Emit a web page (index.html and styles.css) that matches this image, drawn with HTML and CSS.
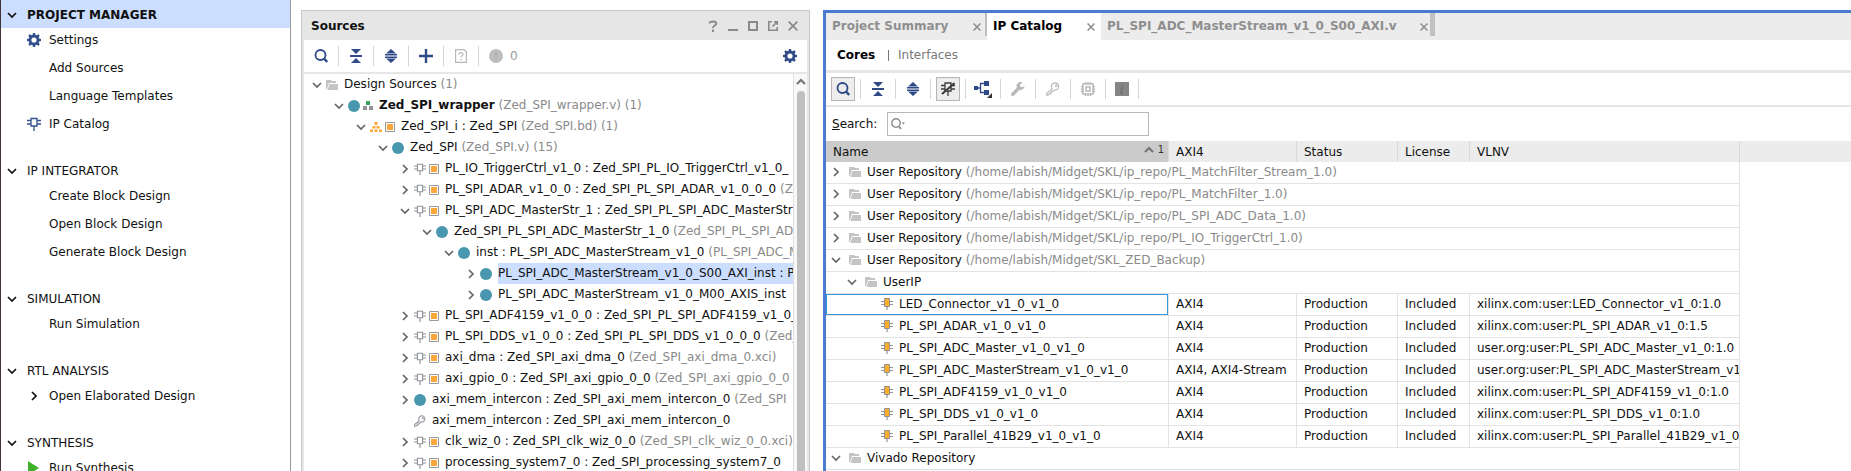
FILE: index.html
```html
<!DOCTYPE html>
<html lang="en">
<head>
<meta charset="utf-8">
<title>Project Manager</title>
<link rel="stylesheet" href="styles.css">
</head>
<body>
<svg class="defs" aria-hidden="true">
  <symbol id="down" viewBox="0 0 10 10"><path d="M1 3l4 4 4-4" fill="none" stroke="currentColor" stroke-width="1.7"/></symbol>
  <symbol id="right" viewBox="0 0 10 10"><path d="M3 1l4 4-4 4" fill="none" stroke="currentColor" stroke-width="1.7"/></symbol>
  <symbol id="up" viewBox="0 0 10 10"><path d="M1 7l4-4 4 4" fill="none" stroke="currentColor" stroke-width="2.2"/></symbol>
  <symbol id="gear" viewBox="0 0 14 14"><path fill="currentColor" fill-rule="evenodd" d="M6 0h2l.5 1.9 1 .4 1.8-1 1.4 1.4-1 1.8.4 1L14 6v2l-1.9.5-.4 1 1 1.8-1.4 1.4-1.8-1-1 .4L8 14H6l-.5-1.9-1-.4-1.8 1-1.4-1.4 1-1.8-.4-1L0 8V6l1.900-.5.4-1-1-1.800 1.400-1.400 1.800 1 1-.4zM7 4.400a2.600 2.600 0 1 0 0 5.200 2.600 2.600 0 0 0 0-5.200z"/></symbol>
  <symbol id="plug" viewBox="0 0 14 14"><path d="M4 1.500h6v7.500H4zM0 3.500h4M0 7h4M10 3.500h4M10 7h4M7 9v5" fill="none" stroke="currentColor" stroke-width="1.300"/></symbol>
  <symbol id="ip" viewBox="0 0 12 12"><path d="M0 3.500h12M0 6.500h12M6 8v4" stroke="#8f9296" stroke-width="1.200"/><path d="M3.500.5h5v8h-5z" fill="#ffae2b" stroke="#8f9296" stroke-width="1"/></symbol>
  <symbol id="play" viewBox="0 0 12 14"><path d="M1 0l11 7L1 14z" fill="#3fb02a"/></symbol>
  <symbol id="folder" viewBox="0 0 12 10"><path d="M0 0h5l1 1h4v2H3L1 9H0z" fill="#c4c4c4"/><path d="M3.500 4H12v6H1.500z" fill="#c4c4c4"/></symbol>
  <symbol id="dot" viewBox="0 0 12 12"><circle cx="6" cy="6" r="6" fill="#4996af"/></symbol>
  <symbol id="square" viewBox="0 0 10 10"><path d="M.5.5h9v9h-9z" fill="#fff" stroke="#9a9a9a"/><path d="M2 2h6v6H2z" fill="#fda63a"/></symbol>
  <symbol id="hier" viewBox="0 0 10 9"><path d="M3 0h4v4H3z" fill="#35a35a"/><path d="M0 5h4v4H0zM6 5h4v4H6z" fill="#909498"/></symbol>
  <symbol id="bd" viewBox="0 0 12 10"><path d="M4.500 0h3v3h-3zM2.500 4h3v2.500h-3zM6.500 4h3v2.500h-3zM0 7.500h3V10H0zM4.500 7.500h3V10h-3zM9 7.500h3V10H9z" fill="#fda63a"/></symbol>
  <symbol id="key" viewBox="0 0 14 14"><path d="M6.200 6.600A3.600 3.600 0 1 1 8.500 8L7 9.300H5.700v1.300H4.400V12H3l-1 1.200H.7v-2z" fill="none" stroke="currentColor" stroke-width="1.200"/><circle cx="10.300" cy="3.800" r="1" fill="none" stroke="currentColor"/></symbol>
  <symbol id="search" viewBox="0 0 14 14"><circle cx="6.500" cy="6" r="5" fill="none" stroke="currentColor" stroke-width="1.800"/><path d="M9.500 9l3.700 4" stroke="currentColor" stroke-width="2.400"/></symbol>
  <symbol id="collapse" viewBox="0 0 12 14"><path d="M1 0h10L6 5zM1 14h10L6 9zM0 6h12v2H0z" fill="currentColor"/></symbol>
  <symbol id="expand" viewBox="0 0 12 14"><path d="M1 4.500h10L6 0zM1 9.500h10L6 14zM0 5h12v1.500H0zM0 7.500h12V9H0z" fill="currentColor"/></symbol>
  <symbol id="plus" viewBox="0 0 14 14"><path d="M7 0v14M0 7h14" stroke="currentColor" stroke-width="2.400"/></symbol>
  <symbol id="doc" viewBox="0 0 12 14"><path d="M.6.600H9L11.400 3v10.400H.6z" fill="none" stroke="currentColor" stroke-width="1.200"/><path d="M4 5.500C4 3 8 3 8 5.300c0 1.500-2 1.400-2 3M6 9.800v1.500" fill="none" stroke="currentColor" stroke-width="1.300"/></symbol>
  <symbol id="alert" viewBox="0 0 14 14"><circle cx="7" cy="7" r="7" fill="#bdbdbd"/><path d="M7 3v5M7 9.500v1.500" stroke="#adadad" stroke-width="1.500"/></symbol>
  <symbol id="help" viewBox="0 0 10 12"><path d="M1.500 3.300C1.800.8 8.300.7 8.300 3.500 8.300 5.600 5 5.400 5 8M5 9.500V12" fill="none" stroke="currentColor" stroke-width="2"/></symbol>
  <symbol id="min" viewBox="0 0 10 10"><path d="M0 9h10" stroke="currentColor" stroke-width="2"/></symbol>
  <symbol id="max" viewBox="0 0 10 10"><path d="M1 1h8v8H1z" fill="none" stroke="currentColor" stroke-width="2"/></symbol>
  <symbol id="pop" viewBox="0 0 10 10"><path d="M4 .8H.8v8.400h8.400V6M4.500 5.500L9 1M6 .8h3.300V4" fill="none" stroke="currentColor" stroke-width="1.600"/></symbol>
  <symbol id="close" viewBox="0 0 10 10"><path d="M.7.700l8.600 8.600M9.300.7L.7 9.300" stroke="currentColor" stroke-width="1.800"/></symbol>
  <symbol id="plugoff" viewBox="0 0 14 14"><path d="M4 1h6v8H4zM0 3.500h4M10 3.500h4M0 7h4M10 7h4M7 9v5" fill="none" stroke="#3c3c3c" stroke-width="1.300"/><path d="M1 12L13.500 1" stroke="#3c3c3c" stroke-width="2"/></symbol>
  <symbol id="tree" viewBox="0 0 18 18"><path d="M0 6h4v4H0zM10 1h5v5h-5zM10 10h5v5h-5z" fill="#2f4a86"/><path d="M4 8h3M10 3.500H6.500v9H10" fill="none" stroke="#2f4a86" stroke-width="1.300"/><path d="M18 13v5h-5z" fill="#333"/></symbol>
  <symbol id="wrench" viewBox="0 0 14 14"><path d="M1.800 12.200l6-6" stroke="currentColor" stroke-width="3.400" stroke-linecap="round"/><path d="M11.500.5A4 4 0 1 0 13.500 4L11 5.200 9.200 4.600 9 2.700z" fill="currentColor"/></symbol>
  <symbol id="chip" viewBox="0 0 14 14"><path d="M2 2h10v10H2zM5 5h4v4H5zM4.500 0v2M7 0v2M9.500 0v2M4.500 12v2M7 12v2M9.500 12v2M0 4.500h2M0 7h2M0 9.500h2M12 4.500h2M12 7h2M12 9.500h2" fill="none" stroke="currentColor" stroke-width="1.500"/></symbol>
  <symbol id="info" viewBox="0 0 14 14"><path d="M0 0h14v14H0z" fill="#858585"/><path d="M7.800 2.500l-.3 1.500M5.500 6H7l-1 5h2" fill="none" stroke="#707070" stroke-width="1.500"/></symbol>
  <symbol id="find" viewBox="0 0 14 12"><circle cx="5" cy="5" r="4.200" fill="none" stroke="#8c8c8c" stroke-width="1.400"/><path d="M7.500 8l2.500 3" stroke="#8c8c8c" stroke-width="1.800"/><path d="M10.500 4.500h3.500l-1.750 2z" fill="#8c8c8c"/></symbol>
</svg>
<div class="app">
  <nav class="flow" aria-label="Flow navigator">
    <section>
      <h2 class="current"><svg class="s10"><use href="#down"/></svg>PROJECT MANAGER</h2>
      <ul>
        <li><span class="slot"><svg class="s14 blue"><use href="#gear"/></svg></span><a href="#">Settings</a></li>
        <li><span class="slot"></span><a href="#">Add Sources</a></li>
        <li><span class="slot"></span><a href="#">Language Templates</a></li>
        <li><span class="slot"><svg class="s14 blue"><use href="#plug"/></svg></span><a href="#">IP Catalog</a></li>
      </ul>
    </section>
    <section>
      <h2><svg class="s10"><use href="#down"/></svg>IP INTEGRATOR</h2>
      <ul>
        <li><span class="slot"></span><a href="#">Create Block Design</a></li>
        <li><span class="slot"></span><a href="#">Open Block Design</a></li>
        <li><span class="slot"></span><a href="#">Generate Block Design</a></li>
      </ul>
    </section>
    <section>
      <h2><svg class="s10"><use href="#down"/></svg>SIMULATION</h2>
      <ul>
        <li><span class="slot"></span><a href="#">Run Simulation</a></li>
      </ul>
    </section>
    <section>
      <h2><svg class="s10"><use href="#down"/></svg>RTL ANALYSIS</h2>
      <ul>
        <li><span class="slot mid"><svg class="s10"><use href="#right"/></svg></span><a href="#">Open Elaborated Design</a></li>
      </ul>
    </section>
    <section>
      <h2><svg class="s10"><use href="#down"/></svg>SYNTHESIS</h2>
      <ul>
        <li><span class="slot"><svg class="i12x14"><use href="#play"/></svg></span><a href="#">Run Synthesis</a></li>
      </ul>
    </section>
  </nav>

  <section class="sources">
    <header>
      <h2>Sources</h2>
      <div class="winbtns">
        <button aria-label="Help"><svg class="i10x12"><use href="#help"/></svg></button>
        <button aria-label="Minimize"><svg class="s10"><use href="#min"/></svg></button>
        <button aria-label="Maximize"><svg class="s10"><use href="#max"/></svg></button>
        <button aria-label="Float"><svg class="s10"><use href="#pop"/></svg></button>
        <button aria-label="Close"><svg class="s10"><use href="#close"/></svg></button>
      </div>
    </header>
    <div class="toolbar">
      <button aria-label="Search"><svg class="s14"><use href="#search"/></svg></button>
      <button aria-label="Collapse all"><svg class="i12x14"><use href="#collapse"/></svg></button>
      <button aria-label="Expand all"><svg class="i12x14"><use href="#expand"/></svg></button>
      <button aria-label="Add sources"><svg class="s14"><use href="#plus"/></svg></button>
      <button aria-label="Properties" class="off"><svg class="i12x14"><use href="#doc"/></svg></button>
      <span class="count"><svg class="s14"><use href="#alert"/></svg>0</span>
      <button aria-label="Settings" class="end"><svg class="s14"><use href="#gear"/></svg></button>
    </div>
    <div class="treebox">
      <ul class="tree">
        <li class="l0"><button aria-label="Collapse"><svg class="s10"><use href="#down"/></svg></button><svg class="i12x10"><use href="#folder"/></svg><span>Design Sources <i>(1)</i></span></li>
        <li class="l1"><button aria-label="Collapse"><svg class="s10"><use href="#down"/></svg></button><svg class="s12"><use href="#dot"/></svg><svg class="i10x9"><use href="#hier"/></svg><span><b>Zed_SPI_wrapper</b> <i>(Zed_SPI_wrapper.v) (1)</i></span></li>
        <li class="l2"><button aria-label="Collapse"><svg class="s10"><use href="#down"/></svg></button><svg class="i12x10"><use href="#bd"/></svg><svg class="s10"><use href="#square"/></svg><span>Zed_SPI_i : Zed_SPI <i>(Zed_SPI.bd) (1)</i></span></li>
        <li class="l3"><button aria-label="Collapse"><svg class="s10"><use href="#down"/></svg></button><svg class="s12"><use href="#dot"/></svg><span>Zed_SPI <i>(Zed_SPI.v) (15)</i></span></li>
        <li class="l4"><button aria-label="Expand"><svg class="s10"><use href="#right"/></svg></button><svg class="s12 grey"><use href="#plug"/></svg><svg class="s10"><use href="#square"/></svg><span>PL_IO_TriggerCtrl_v1_0 : Zed_SPI_PL_IO_TriggerCtrl_v1_0_</span></li>
        <li class="l4"><button aria-label="Expand"><svg class="s10"><use href="#right"/></svg></button><svg class="s12 grey"><use href="#plug"/></svg><svg class="s10"><use href="#square"/></svg><span>PL_SPI_ADAR_v1_0_0 : Zed_SPI_PL_SPI_ADAR_v1_0_0_0 <i>(Zed_SPI</i></span></li>
        <li class="l4"><button aria-label="Collapse"><svg class="s10"><use href="#down"/></svg></button><svg class="s12 grey"><use href="#plug"/></svg><svg class="s10"><use href="#square"/></svg><span>PL_SPI_ADC_MasterStr_1 : Zed_SPI_PL_SPI_ADC_MasterStr</span></li>
        <li class="l5"><button aria-label="Collapse"><svg class="s10"><use href="#down"/></svg></button><svg class="s12"><use href="#dot"/></svg><span>Zed_SPI_PL_SPI_ADC_MasterStr_1_0 <i>(Zed_SPI_PL_SPI_ADC</i></span></li>
        <li class="l6"><button aria-label="Collapse"><svg class="s10"><use href="#down"/></svg></button><svg class="s12"><use href="#dot"/></svg><span>inst : PL_SPI_ADC_MasterStream_v1_0 <i>(PL_SPI_ADC_M</i></span></li>
        <li class="l7"><button aria-label="Expand"><svg class="s10"><use href="#right"/></svg></button><svg class="s12"><use href="#dot"/></svg><span class="picked">PL_SPI_ADC_MasterStream_v1_0_S00_AXI_inst : PL</span></li>
        <li class="l7"><button aria-label="Expand"><svg class="s10"><use href="#right"/></svg></button><svg class="s12"><use href="#dot"/></svg><span>PL_SPI_ADC_MasterStream_v1_0_M00_AXIS_inst</span></li>
        <li class="l4"><button aria-label="Expand"><svg class="s10"><use href="#right"/></svg></button><svg class="s12 grey"><use href="#plug"/></svg><svg class="s10"><use href="#square"/></svg><span>PL_SPI_ADF4159_v1_0_0 : Zed_SPI_PL_SPI_ADF4159_v1_0_0</span></li>
        <li class="l4"><button aria-label="Expand"><svg class="s10"><use href="#right"/></svg></button><svg class="s12 grey"><use href="#plug"/></svg><svg class="s10"><use href="#square"/></svg><span>PL_SPI_DDS_v1_0_0 : Zed_SPI_PL_SPI_DDS_v1_0_0_0 <i>(Zed_SPI</i></span></li>
        <li class="l4"><button aria-label="Expand"><svg class="s10"><use href="#right"/></svg></button><svg class="s12 grey"><use href="#plug"/></svg><svg class="s10"><use href="#square"/></svg><span>axi_dma : Zed_SPI_axi_dma_0 <i>(Zed_SPI_axi_dma_0.xci)</i></span></li>
        <li class="l4"><button aria-label="Expand"><svg class="s10"><use href="#right"/></svg></button><svg class="s12 grey"><use href="#plug"/></svg><svg class="s10"><use href="#square"/></svg><span>axi_gpio_0 : Zed_SPI_axi_gpio_0_0 <i>(Zed_SPI_axi_gpio_0_0</i></span></li>
        <li class="l4"><button aria-label="Expand"><svg class="s10"><use href="#right"/></svg></button><svg class="s12"><use href="#dot"/></svg><span>axi_mem_intercon : Zed_SPI_axi_mem_intercon_0 <i>(Zed_SPI</i></span></li>
        <li class="l4 leaf"><svg class="s12 grey"><use href="#key"/></svg><span>axi_mem_intercon : Zed_SPI_axi_mem_intercon_0</span></li>
        <li class="l4"><button aria-label="Expand"><svg class="s10"><use href="#right"/></svg></button><svg class="s12 grey"><use href="#plug"/></svg><svg class="s10"><use href="#square"/></svg><span>clk_wiz_0 : Zed_SPI_clk_wiz_0_0 <i>(Zed_SPI_clk_wiz_0_0.xci)</i></span></li>
        <li class="l4"><button aria-label="Expand"><svg class="s10"><use href="#right"/></svg></button><svg class="s12 grey"><use href="#plug"/></svg><svg class="s10"><use href="#square"/></svg><span>processing_system7_0 : Zed_SPI_processing_system7_0</span></li>
      </ul>
      <div class="scroll"><svg class="s10"><use href="#up"/></svg><div class="thumb"></div></div>
    </div>
  </section>

  <main class="catalog">
    <div class="tabs">
      <div class="tab first"><span>Project Summary</span><button aria-label="Close tab"><svg class="s8"><use href="#close"/></svg></button></div>
      <div class="tab active"><span>IP Catalog</span><button aria-label="Close tab"><svg class="s8"><use href="#close"/></svg></button></div>
      <div class="tab last"><span>PL_SPI_ADC_MasterStream_v1_0_S00_AXI.v</span><button aria-label="Close tab"><svg class="s8"><use href="#close"/></svg></button></div>
    </div>
    <div class="views"><b>Cores</b><span class="bar"></span><a href="#">Interfaces</a></div>
    <div class="toolbar">
      <button aria-label="Search" class="on"><svg class="s14"><use href="#search"/></svg></button>
      <button aria-label="Collapse all"><svg class="i12x14"><use href="#collapse"/></svg></button>
      <button aria-label="Expand all"><svg class="i12x14"><use href="#expand"/></svg></button>
      <button aria-label="Hide incompatible" class="on"><svg class="s14"><use href="#plugoff"/></svg></button>
      <button aria-label="Group by"><svg class="s18"><use href="#tree"/></svg></button>
      <button aria-label="Customize" class="off"><svg class="s14"><use href="#wrench"/></svg></button>
      <button aria-label="License" class="off"><svg class="s14"><use href="#key"/></svg></button>
      <button aria-label="Compatible families" class="off"><svg class="s14"><use href="#chip"/></svg></button>
      <button aria-label="Information" class="info"><svg class="s14"><use href="#info"/></svg></button>
    </div>
    <div class="searchrow">
      <label for="q"><u>S</u>earch:</label>
      <div class="field"><svg class="i14x12"><use href="#find"/></svg><input id="q" type="text"></div>
    </div>
    <table>
      <colgroup><col class="c1"><col class="c2"><col class="c3"><col class="c4"><col class="c5"><col></colgroup>
      <thead>
        <tr><th class="sorted"><div>Name<span class="order"><svg class="s10"><use href="#up"/></svg>1</span></div></th><th>AXI4</th><th>Status</th><th>License</th><th>VLNV</th><th class="rest"></th></tr>
      </thead>
      <tbody>
        <tr class="group"><td colspan="5"><div><button aria-label="Expand"><svg class="s10"><use href="#right"/></svg></button><svg class="i12x10"><use href="#folder"/></svg>User Repository&nbsp;<i>(/home/labish/Midget/SKL/ip_repo/PL_MatchFilter_Stream_1.0)</i></div></td></tr>
        <tr class="group"><td colspan="5"><div><button aria-label="Expand"><svg class="s10"><use href="#right"/></svg></button><svg class="i12x10"><use href="#folder"/></svg>User Repository&nbsp;<i>(/home/labish/Midget/SKL/ip_repo/PL_MatchFilter_1.0)</i></div></td></tr>
        <tr class="group"><td colspan="5"><div><button aria-label="Expand"><svg class="s10"><use href="#right"/></svg></button><svg class="i12x10"><use href="#folder"/></svg>User Repository&nbsp;<i>(/home/labish/Midget/SKL/ip_repo/PL_SPI_ADC_Data_1.0)</i></div></td></tr>
        <tr class="group"><td colspan="5"><div><button aria-label="Expand"><svg class="s10"><use href="#right"/></svg></button><svg class="i12x10"><use href="#folder"/></svg>User Repository&nbsp;<i>(/home/labish/Midget/SKL/ip_repo/PL_IO_TriggerCtrl_1.0)</i></div></td></tr>
        <tr class="group"><td colspan="5"><div><button aria-label="Collapse"><svg class="s10"><use href="#down"/></svg></button><svg class="i12x10"><use href="#folder"/></svg>User Repository&nbsp;<i>(/home/labish/Midget/SKL_ZED_Backup)</i></div></td></tr>
        <tr class="group sub"><td colspan="5"><div><button aria-label="Collapse"><svg class="s10"><use href="#down"/></svg></button><svg class="i12x10"><use href="#folder"/></svg>UserIP</div></td></tr>
        <tr class="focus"><td><div><svg class="s12"><use href="#ip"/></svg>LED_Connector_v1_0_v1_0</div></td><td>AXI4</td><td>Production</td><td>Included</td><td>xilinx.com:user:LED_Connector_v1_0:1.0</td></tr>
        <tr><td><div><svg class="s12"><use href="#ip"/></svg>PL_SPI_ADAR_v1_0_v1_0</div></td><td>AXI4</td><td>Production</td><td>Included</td><td>xilinx.com:user:PL_SPI_ADAR_v1_0:1.5</td></tr>
        <tr><td><div><svg class="s12"><use href="#ip"/></svg>PL_SPI_ADC_Master_v1_0_v1_0</div></td><td>AXI4</td><td>Production</td><td>Included</td><td>user.org:user:PL_SPI_ADC_Master_v1_0:1.0</td></tr>
        <tr><td><div><svg class="s12"><use href="#ip"/></svg>PL_SPI_ADC_MasterStream_v1_0_v1_0</div></td><td>AXI4, AXI4-Stream</td><td>Production</td><td>Included</td><td>user.org:user:PL_SPI_ADC_MasterStream_v1</td></tr>
        <tr><td><div><svg class="s12"><use href="#ip"/></svg>PL_SPI_ADF4159_v1_0_v1_0</div></td><td>AXI4</td><td>Production</td><td>Included</td><td>xilinx.com:user:PL_SPI_ADF4159_v1_0:1.0</td></tr>
        <tr><td><div><svg class="s12"><use href="#ip"/></svg>PL_SPI_DDS_v1_0_v1_0</div></td><td>AXI4</td><td>Production</td><td>Included</td><td>xilinx.com:user:PL_SPI_DDS_v1_0:1.0</td></tr>
        <tr><td><div><svg class="s12"><use href="#ip"/></svg>PL_SPI_Parallel_41B29_v1_0_v1_0</div></td><td>AXI4</td><td>Production</td><td>Included</td><td>xilinx.com:user:PL_SPI_Parallel_41B29_v1_0</td></tr>
        <tr class="group"><td colspan="5"><div><button aria-label="Collapse"><svg class="s10"><use href="#down"/></svg></button><svg class="i12x10"><use href="#folder"/></svg>Vivado Repository</div></td></tr>
      </tbody>
    </table>
  </main>
</div>
</body>
</html>
```

FILE: styles.css
```css
* { box-sizing: border-box; }
body {
  margin: 0;
  background: #fff;
  color: #111;
  font: 12px/21px "DejaVu Sans", sans-serif;
}
.defs { position: absolute; width: 0; height: 0; }
h2 { margin: 0; font-size: 12px; }
ul { margin: 0; padding: 0; list-style: none; }
i { font-style: normal; color: #8a8a8a; }
a { color: inherit; text-decoration: none; }
button {
  display: flex;
  align-items: center;
  justify-content: center;
  margin: 0;
  padding: 0;
  border: 0;
  background: none;
  color: inherit;
  font: inherit;
}
svg { display: block; flex: none; }
.s8 { width: 8px; height: 8px; }
.s10 { width: 10px; height: 10px; }
.s12 { width: 12px; height: 12px; }
.s14 { width: 14px; height: 14px; }
.s18 { width: 18px; height: 18px; }
.i12x14 { width: 12px; height: 14px; }
.i10x12 { width: 10px; height: 12px; }
.i12x10 { width: 12px; height: 10px; }
.i10x9 { width: 10px; height: 9px; }
.i14x12 { width: 14px; height: 12px; }
.blue { color: #33508c; }
.grey { color: #8f9296; }

.app { display: flex; height: 100vh; overflow: hidden; }

/* flow navigator */
.flow {
  flex: none;
  width: 291px;
  overflow: hidden;
  border-left: 1px solid #43333a;
  border-right: 1px solid #999;
}
.flow section { margin-bottom: 22px; }
.flow h2 {
  display: flex;
  align-items: center;
  gap: 10px;
  height: 28px;
  padding: 2px 0 0 6px;
  font-weight: normal;
}
.flow h2.current { background: #cbdeff; font-weight: bold; }
.flow ul { display: grid; gap: 6px; }
.flow li {
  display: flex;
  align-items: center;
  height: 22px;
  padding: 2px 0 0 26px;
}
.slot { flex: none; width: 22px; }
.slot.mid { padding-left: 2px; }

/* sources */
.sources {
  flex: none;
  display: flex;
  flex-direction: column;
  width: 509px;
  margin: 10px 13px 0 10px;
  border: 1px solid #c8c8c8;
  border-bottom: 0;
  padding: 0 2px;
  background: #e6e6e6;
}
.sources header {
  display: flex;
  align-items: center;
  justify-content: space-between;
  height: 29px;
  padding: 1px 9px 0 7px;
}
.winbtns { display: flex; align-items: center; gap: 10px; color: #8a8a8a; }
.toolbar {
  display: flex;
  align-items: center;
  height: 32px;
  background: #fff;
  color: #2f4a86;
}
.toolbar button, .count {
  flex: none;
  width: 35px;
  height: 20px;
  border-right: 1px solid #d5d5d5;
}
.toolbar .off { color: #b9b9b9; }
.toolbar .end { margin-left: auto; border: 0; }
.toolbar .info { width: 33px; }
.toolbar .on { position: relative; z-index: 0; color: #2f4a86; }
.toolbar .on::before {
  content: "";
  position: absolute;
  z-index: -1;
  inset: -2px 5px;
  border: 1px solid #b5b5b5;
  background: #ededed;
}
.toolbar .count {
  display: flex;
  align-items: center;
  gap: 7px;
  width: auto;
  padding-left: 10px;
  border: 0;
  color: #999;
}
.treebox {
  flex: 1;
  display: flex;
  min-height: 0;
  margin-top: 2px;
  background: #fff;
}
.tree { flex: 1; min-width: 0; overflow: hidden; }
.tree li {
  display: flex;
  align-items: center;
  height: 21px;
  white-space: nowrap;
}
.tree li button { flex: none; width: 18px; height: 21px; color: #666; }
.tree li svg + svg { margin-left: 3px; }
.tree li span { flex: none; margin-left: 6px; }
.l0 { padding-left: 4px; }
.l1 { padding-left: 26px; }
.l2 { padding-left: 48px; }
.l3 { padding-left: 70px; }
.l4 { padding-left: 92px; }
.l5 { padding-left: 114px; }
.l6 { padding-left: 136px; }
.l7 { padding-left: 158px; }
.tree .leaf { padding-left: 110px; }
.picked { background: #cbdeff; }
.scroll {
  display: flex;
  flex-direction: column;
  align-items: center;
  gap: 4px;
  width: 14px;
  padding-top: 3px;
  border-left: 1px solid #e0e0e0;
  background: #f8f8f8;
  color: #777;
}
.thumb { flex: 1; width: 8px; border-radius: 4px 4px 0 0; background: #bfbfbf; }

/* catalog */
.catalog {
  flex: 1;
  min-width: 0;
  margin-top: 10px;
  overflow: hidden;
  border-top: 3px solid #4a7bd0;
  border-left: 3px solid #4a7bd0;
}
.tabs {
  display: flex;
  height: 27px;
  background: #ececec;
  color: #8f8f8f;
  font-weight: bold;
}
.tab {
  display: flex;
  align-items: center;
  justify-content: space-between;
  padding: 0 6px;
}
.tab.first {
  width: 161px;
  height: 23px;
  padding-right: 4px;
  border-right: 2px solid #bdbdbd;
}
.tab.active { width: 114px; background: #fff; color: #000; }
.tab.last {
  width: 334px;
  height: 23px;
  padding-right: 2px;
  border-right: 5px solid #c1c1c1;
}
.tab.first span, .tab.last span { padding-top: 4px; }
.tab button { padding-top: 1px; color: #8a8a8a; }
.tab.first button, .tab.last button { padding-top: 5px; }
.views {
  display: flex;
  align-items: center;
  height: 33px;
  padding: 1px 0 0 11px;
  border-bottom: 3px solid #e6e6e6;
}
.views b { width: 51px; color: #000; }
.views a { color: #777; }
.bar { width: 1px; height: 11px; margin-right: 9px; background: #777; }
.catalog .toolbar { height: 34px; border-bottom: 2px solid #e6e6e6; }
.searchrow {
  display: flex;
  align-items: center;
  height: 34px;
  padding-left: 6px;
}
.searchrow label { width: 55px; }
.field {
  display: flex;
  align-items: center;
  width: 262px;
  height: 24px;
  padding-left: 3px;
  border: 1px solid #b8b8b8;
}
.field input {
  flex: 1;
  min-width: 0;
  border: 0;
  outline: 0;
  background: none;
  font: inherit;
}
table { width: 100%; table-layout: fixed; border-collapse: separate; border-spacing: 0; }
.c1 { width: 343px; }
.c2 { width: 128px; }
.c3 { width: 101px; }
.c4 { width: 72px; }
.c5 { width: 270px; }
th, td {
  height: 22px;
  padding: 0 0 0 7px;
  overflow: hidden;
  border-right: 1px solid #e3e3e3;
  font-weight: normal;
  line-height: 20px;
  text-align: left;
  white-space: nowrap;
}
th { height: 21px; background: #ececec; border-color: #dadada; }
th.sorted { background: #cbcbcb; }
th.rest { border: 0; }
td { padding-bottom: 2px; border-bottom: 1px solid #e3e3e3; line-height: 18px; }
th div, td div { display: flex; align-items: center; }
th div { justify-content: space-between; }
.order {
  display: flex;
  align-items: center;
  gap: 4px;
  padding: 0 4px 4px 0;
  color: #333;
  font-size: 10px;
  line-height: 16px;
}
.order svg { color: #777; }
td:first-child div { gap: 6px; padding-left: 48px; }
.group td:first-child div { gap: 0; padding-left: 0; }
.group td .i12x10 { margin-right: 6px; }
.group td button { width: 16px; margin-left: -5px; margin-right: 5px; color: #666; }
.group td:first-child { padding-left: 7px; }
.group.sub td:first-child { padding-left: 23px; }
.focus td:first-child { box-shadow: inset 0 0 0 1px #3a96d8; }
```
